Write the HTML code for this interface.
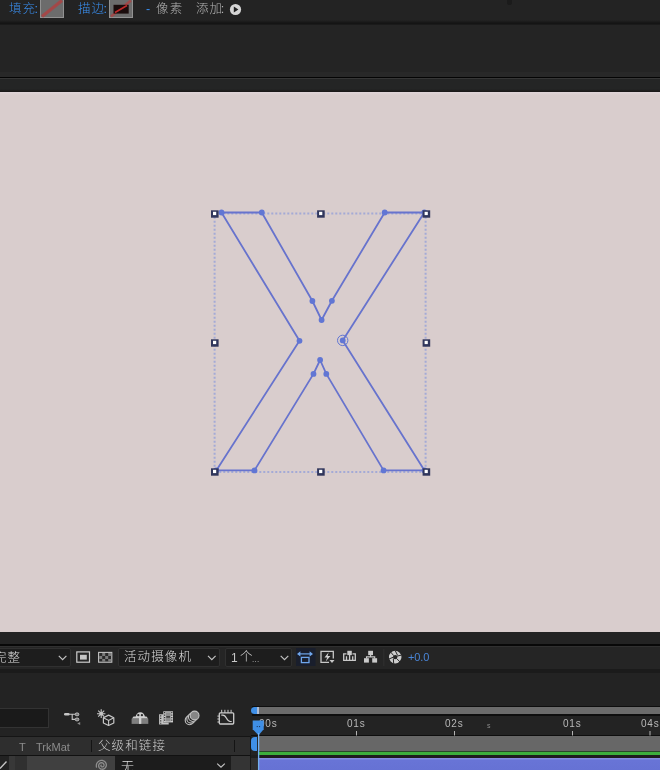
<!DOCTYPE html>
<html lang="zh-CN">
<head>
<meta charset="utf-8">
<title>AE</title>
<style>
*{margin:0;padding:0;box-sizing:border-box}
html,body{width:660px;height:770px;overflow:hidden;background:#232323}
.t{will-change:transform}
body{position:relative;font-family:"Liberation Sans","Noto Sans CJK SC",sans-serif;font-size:12px;color:#a8a8a8}
.abs{position:absolute}
.t{position:absolute;white-space:nowrap;line-height:1;font-weight:300}
</style>
</head>
<body>
<!-- top toolbar -->
<div class="abs" style="left:0;top:0;width:660px;height:20px;background:#232323"></div>
<div class="abs" style="left:0;top:19.500px;width:660px;height:6px;background:linear-gradient(#232323,#161616 45%,#141414 60%,#242424)"></div>
<div class="abs" style="left:0;top:25px;width:660px;height:47px;background:#242424"></div>
<div class="abs" style="left:0;top:72px;width:660px;height:4.600px;background:#282828"></div>
<div class="abs" style="left:0;top:76.600px;width:660px;height:1.700px;background:#040404"></div>
<div class="abs" style="left:0;top:78.300px;width:660px;height:1px;background:#363636"></div>
<div class="abs" style="left:0;top:79.300px;width:660px;height:9.300px;background:#242525"></div>
<div class="abs" style="left:0;top:88.600px;width:660px;height:3.400px;background:linear-gradient(#242525,#191717)"></div>
<div class="abs" style="left:506.500px;top:0;width:5px;height:4.500px;background:#1b1b1b;border-radius:0 0 2px 2px"></div>

<span class="t" style="left:9px;top:2.5px;color:#3a8ff0;font-size:12.5px;letter-spacing:.9px">填<span style="letter-spacing:-.3px">充</span>:</span>
<svg class="abs" style="left:40px;top:0" width="24" height="18" viewBox="0 0 24 18"><rect x="0.5" y="-1" width="23" height="18.5" fill="#6c6c6c" stroke="#929292"/><line x1="2" y1="16.500" x2="22" y2="0.500" stroke="#b04040" stroke-width="3.200" stroke-opacity=".8"/></svg>
<span class="t" style="left:78px;top:2.5px;color:#3a8ff0;font-size:12.5px;letter-spacing:.9px">描<span style="letter-spacing:-.3px">边</span>:</span>
<svg class="abs" style="left:109px;top:0" width="24" height="18" viewBox="0 0 24 18"><rect x="0.5" y="-1" width="23" height="18.5" fill="#6c6c6c" stroke="#929292"/><line x1="2" y1="16.500" x2="22" y2="0.500" stroke="#b04040" stroke-width="2.600" stroke-opacity=".75"/><rect x="4.500" y="4.800" width="15.200" height="8.800" fill="#1a0c0c"/><line x1="6" y1="12.5" x2="18" y2="5.5" stroke="#c02a2a" stroke-width="1.6"/></svg>
<span class="t" style="left:145.5px;top:2.5px;color:#3a8ff0;font-size:12.5px">-</span>
<span class="t" style="left:155.5px;top:2.5px;color:#b2b2b2;font-size:12.5px;letter-spacing:1.2px">像素</span>
<span class="t" style="left:195.8px;top:2.5px;color:#b2b2b2;font-size:12.5px;letter-spacing:.9px">添<span style="letter-spacing:-1.2px">加</span>:</span>
<svg class="abs" style="left:229px;top:3px" width="13" height="13" viewBox="0 0 13 13"><circle cx="6.500" cy="6.500" r="5.600" fill="#d6d6d6"/><path d="M4.800 3.600v5.800l4.600-2.900z" fill="#222"/></svg>

<!-- canvas -->
<div class="abs" style="left:0;top:91.800px;width:660px;height:540px;background:linear-gradient(#e0d5d8,#d9cdcd 3px)"></div>
<svg class="abs" style="left:0;top:92px" width="660" height="540" viewBox="0 92 660 540">
<g fill="none" stroke="#a4aad6" stroke-width="2" stroke-dasharray="2 2">
<path d="M215.300 213.600H425"/><path d="M215.300 472H425"/><path d="M214.600 216.800V470"/><path d="M425.600 216.800V470"/>
</g>
<path d="M221.5 212.5 L261.8 212.5 L312.4 301 L321.6 320 L331.9 300.8 L384.7 212.5 L424.3 212.5 L342.7 340.4 L424.5 470.4 L383.6 470.4 L326.3 373.9 L320.1 360 L313.5 373.9 L254.5 470.4 L216.3 470.4 L299.5 340.8Z" fill="none" stroke="#6773cd" stroke-width="1.800" stroke-linejoin="round"/>
<g fill="#6176d4"><circle cx="221.5" cy="212.5" r="2.900"/><circle cx="261.8" cy="212.5" r="2.900"/><circle cx="312.4" cy="301" r="2.900"/><circle cx="321.6" cy="320" r="2.900"/><circle cx="331.9" cy="300.8" r="2.900"/><circle cx="384.7" cy="212.5" r="2.900"/><circle cx="424.3" cy="212.5" r="2.900"/><circle cx="342.7" cy="340.4" r="2.900"/><circle cx="424.5" cy="470.4" r="2.900"/><circle cx="383.6" cy="470.4" r="2.900"/><circle cx="326.3" cy="373.9" r="2.900"/><circle cx="320.1" cy="360" r="2.900"/><circle cx="313.5" cy="373.9" r="2.900"/><circle cx="254.5" cy="470.4" r="2.900"/><circle cx="216.3" cy="470.4" r="2.900"/><circle cx="299.5" cy="340.8" r="2.900"/></g>
<circle cx="342.700" cy="340.400" r="5.200" fill="none" stroke="#6176d4" stroke-width="1"/>
<rect x="211.0" y="210.3" width="7.600" height="7.400" fill="#30365c"/><rect x="213.0" y="211.8" width="3.200" height="3.300" fill="#fff"/>
<rect x="211.0" y="339.3" width="7.600" height="7.400" fill="#30365c"/><rect x="213.0" y="340.8" width="3.200" height="3.300" fill="#fff"/>
<rect x="211.0" y="468.3" width="7.600" height="7.400" fill="#30365c"/><rect x="213.0" y="469.8" width="3.200" height="3.300" fill="#fff"/>
<rect x="317.1" y="210.3" width="7.600" height="7.400" fill="#30365c"/><rect x="319.1" y="211.8" width="3.200" height="3.300" fill="#fff"/>
<rect x="317.1" y="468.3" width="7.600" height="7.400" fill="#30365c"/><rect x="319.1" y="469.8" width="3.200" height="3.300" fill="#fff"/>
<rect x="422.6" y="210.3" width="7.600" height="7.400" fill="#30365c"/><rect x="424.6" y="211.8" width="3.200" height="3.300" fill="#fff"/>
<rect x="422.6" y="339.3" width="7.600" height="7.400" fill="#30365c"/><rect x="424.6" y="340.8" width="3.200" height="3.300" fill="#fff"/>
<rect x="422.6" y="468.3" width="7.600" height="7.400" fill="#30365c"/><rect x="424.6" y="469.8" width="3.200" height="3.300" fill="#fff"/>
</svg>

<!-- bottom -->
<div class="abs" style="left:0;top:631.500px;width:660px;height:13px;background:#232323"></div>
<div class="abs" style="left:0;top:644.400px;width:660px;height:1.400px;background:#080808"></div>
<div class="abs" style="left:0;top:645.800px;width:660px;height:1px;background:#303030"></div>
<div class="abs" style="left:0;top:646.800px;width:660px;height:22px;background:#252525"></div>
<div class="abs" style="left:0;top:668.800px;width:660px;height:3.800px;background:#1b1b1b"></div>
<div class="abs" style="left:0;top:673px;width:660px;height:97px;background:#232323"></div>

<!-- viewer toolbar -->
<div class="abs" style="left:-4px;top:648px;width:75px;height:19px;background:#1d1d1d;border:1px solid #303030;border-radius:2px"></div>
<span class="t" style="left:-6.500px;top:651.5px;color:#dcdcdc;font-size:12.5px;letter-spacing:1.1px">完整</span>
<div class="abs" style="left:118px;top:648px;width:102px;height:19px;background:#1d1d1d;border:1px solid #303030;border-radius:2px"></div>
<span class="t" style="left:124px;top:651px;color:#dcdcdc;font-size:12.5px;letter-spacing:1.1px">活动摄像机</span>
<div class="abs" style="left:225px;top:648px;width:67px;height:19px;background:#1d1d1d;border:1px solid #303030;border-radius:2px"></div>
<span class="t" style="left:231px;top:651.5px;color:#c8c8c8;font-size:12px">1</span><span class="t" style="left:239.5px;top:651px;color:#dcdcdc;font-size:12.5px">个</span><span class="t" style="left:251.5px;top:655.5px;color:#c8c8c8;font-size:8px;letter-spacing:.3px">...</span>
<span class="t" style="left:408px;top:652px;color:#4a86d8;font-size:11px;letter-spacing:-.1px">+0.0</span>
<svg class="abs" style="left:0;top:645px" width="660" height="30" viewBox="0 645 660 30" fill="none">
<g stroke="#c2c2c2" stroke-width="1.200"><path d="M58.800 655.900l3.800 3.700 3.800-3.700"/><path d="M208 655.900l3.800 3.700 3.800-3.700"/><path d="M280.700 655.900l3.800 3.700 3.800-3.700"/></g>
<!-- icon1 -->
<rect x="76.800" y="651.900" width="12.700" height="10.300" stroke="#cccccc" stroke-width="1.200"/><rect x="80" y="654.800" width="6.800" height="4.800" fill="#c4c4c4"/>
<!-- icon2 checker -->
<rect x="98.600" y="652.400" width="13.200" height="9.800" fill="#2a2a2a" stroke="#c4c4c4" stroke-width="1.100"/>
<g fill="#7c7c7c"><rect x="102.200" y="653" width="3" height="3"/><rect x="108.200" y="653" width="3" height="3"/><rect x="99.200" y="656" width="3" height="3"/><rect x="105.200" y="656" width="3" height="3"/><rect x="102.200" y="659" width="3" height="2.700"/><rect x="108.200" y="659" width="3" height="2.700"/></g>
<!-- iconA blue -->
<rect x="296" y="648" width="19.500" height="18" fill="#191e2c"/>
<path d="M299 653.900h12" stroke="#6fa6ec" stroke-width="1.200"/><path d="M300.400 651.300v5.200l-3.400-2.600zM309.600 651.300v5.200l3.400-2.600z" fill="#6fa6ec"/><rect x="301.400" y="657.400" width="7.600" height="5.200" stroke="#6fa6ec" stroke-width="1.300"/>
<!-- iconB monitor -->
<g stroke="#c8c8c8" stroke-width="1.300"><path d="M329 662.400H321V651.300H333.300V658.500"/></g>
<path d="M328.700 652.300l-4.200 5.300h2.700l-1.500 4 4.700-5.700h-2.800z" fill="#d0d0d0"/>
<path d="M329.500 660h5l-2.500 3z" fill="#c8c8c8"/>
<!-- iconC -->
<g stroke="#cacaca" stroke-width="1.300"><path d="M346.500 653.800H343.700V660.300H355.300V653.800H352.500"/><path d="M346.500 656.300v4M349.600 655v5.300M352.700 656.300v4"/></g><rect x="347.300" y="650.800" width="4.500" height="4.300" fill="#cacaca"/>
<!-- iconD -->
<g fill="#cacaca"><rect x="368.200" y="650.800" width="4.800" height="4.300"/><rect x="364" y="658.200" width="4.900" height="4.400"/><rect x="372.200" y="658.200" width="4.900" height="4.400"/></g>
<path d="M370.600 655v2M366.500 658.500v-1.600h8.200v1.600" stroke="#cacaca" stroke-width="1.100"/>
<path d="M383.800 649v17" stroke="#2f2f2f" stroke-width="1"/>
<!-- aperture -->
<circle cx="395.200" cy="657.100" r="4.250" stroke="#cccccc" stroke-width="4.100"/>
<g stroke="#262626" stroke-width="1"><path d="M395.200 650.600l2.300 4.600M401.500 655.100l-4.800 1.100M400.200 662.100l-3.500-3.500M393.700 663.600l-.4-5M388.900 659.100l4.500-2M390.700 652.100l3 3.500"/></g>
</svg>

<!-- timeline left -->
<div class="abs" style="left:-2px;top:708px;width:51px;height:20px;background:#1a1a1a;border:1px solid #333"></div>
<div class="abs" style="left:0;top:736px;width:250px;height:1px;background:#151515"></div>
<div class="abs" style="left:0;top:737px;width:250px;height:17.600px;background:#2e2e2e"></div>
<div class="abs" style="left:0;top:754.600px;width:250px;height:1.600px;background:#111"></div>
<div class="abs" style="left:0;top:756.200px;width:9px;height:14px;background:#222"></div>
<div class="abs" style="left:9px;top:756.200px;width:6px;height:14px;background:#383838"></div>
<div class="abs" style="left:15px;top:756.200px;width:12px;height:14px;background:#303030"></div>
<div class="abs" style="left:27px;top:756.200px;width:88px;height:14px;background:#404040"></div>
<div class="abs" style="left:115px;top:756.200px;width:116px;height:14px;background:#1c1c1c"></div>
<div class="abs" style="left:231px;top:756.200px;width:19px;height:14px;background:#343434"></div>
<div class="abs" style="left:91px;top:740px;width:1px;height:12px;background:#141414"></div>
<div class="abs" style="left:234px;top:740px;width:1px;height:12px;background:#141414"></div>
<div class="abs" style="left:250px;top:736px;width:1px;height:34px;background:#181818"></div>
<div class="abs" style="left:251px;top:758px;width:8px;height:12px;background:#303030"></div>
<span class="t" style="left:19.2px;top:741.6px;color:#8c8c8c;font-size:11px">T</span>
<span class="t" style="left:35.7px;top:741.6px;color:#8c8c8c;font-size:11px">TrkMat</span>
<span class="t" style="left:98px;top:740px;color:#cacaca;font-size:12.5px;letter-spacing:1.1px">父级和链接</span>
<span class="t" style="left:121px;top:760px;color:#e0e0e0;font-size:13px">无</span>

<!-- timeline icons -->
<svg class="abs" style="left:55px;top:704px" width="190" height="28" viewBox="55 704 190 28" fill="none">
<!-- hierarchy -->
<rect x="64" y="713" width="5.700" height="2.600" rx="1.300" fill="#c6c6c6"/>
<path d="M69.500 714.300H75.200M72.200 714.300V719.400H75.200" stroke="#c6c6c6" stroke-width="1.100"/>
<rect x="75.300" y="713" width="3.500" height="2.700" rx="1.200" fill="#777" stroke="#c6c6c6" stroke-width="1"/>
<rect x="75.300" y="718.100" width="3.500" height="2.700" rx="1.200" fill="#777" stroke="#c6c6c6" stroke-width="1"/>
<path d="M80.200 722v3l-3-1.500z" fill="#8a8a8a"/>
<!-- star + cube -->
<g stroke="#c6c6c6" stroke-width="1.100"><path d="M101.200 709.300v8.800M97 713.700h8.400M98.200 710.700l6 6M104.200 710.700l-6 6"/></g>
<circle cx="101.200" cy="713.700" r="1.700" fill="#c6c6c6"/>
<path d="M108.600 715.100l5.200 2.700v5.200l-5.200 2.500-5.200-2.500v-5.200z" fill="#232323" stroke="#c6c6c6" stroke-width="1.200" stroke-linejoin="round"/>
<path d="M103.400 717.800l5.200 2.700 5.200-2.700M108.600 720.500v5" stroke="#c6c6c6" stroke-width="1.100"/>
<!-- shy guy -->
<rect x="131.600" y="718.600" width="16.700" height="5.300" fill="#7e7e7e"/>
<path d="M135.700 716.900a4.600 4.600 0 0 1 9.200 0z" fill="#cfcfcf"/>
<path d="M133.500 716.600h13l1.500 2h-16z" fill="#cfcfcf"/>
<rect x="139" y="716.600" width="2.300" height="7.300" fill="#cfcfcf"/>
<circle cx="138.300" cy="715.200" r="1.150" fill="#2a2a2a"/><circle cx="141.900" cy="715.200" r="1.150" fill="#2a2a2a"/>
<!-- film stack -->
<path d="M159.100 714.200h4.200v8.200h5.400v2h-9.600z" fill="#c4c4c4"/>
<path d="M160.700 715.200v8.500" stroke="#333" stroke-width="1.200" stroke-dasharray="1.200 1.300"/>
<rect x="163.300" y="711.300" width="9.700" height="11.100" fill="#cdcdcd"/>
<rect x="165.600" y="712.300" width="5.100" height="9.100" fill="#8e8e8e"/>
<rect x="166.300" y="716.200" width="3.700" height="1.400" fill="#333"/>
<g stroke="#333" stroke-width="1.200" stroke-dasharray="1.200 1.300"><path d="M164.600 712.100v9.800M171.800 712.100v9.800"/></g>
<!-- motion blur -->
<g stroke="#c2c2c2" stroke-width="1.100"><circle cx="189.600" cy="720.300" r="4.400"/><circle cx="191.200" cy="718.700" r="4.400" fill="#232323"/><circle cx="192.900" cy="717.100" r="4.400" fill="#232323"/><circle cx="194.600" cy="715.500" r="4.400" fill="#868686"/></g>
<!-- graph editor -->
<rect x="219.300" y="712.800" width="14.400" height="11.200" rx="1" stroke="#cdcdcd" stroke-width="1.300"/>
<g stroke="#cdcdcd" stroke-width="1"><path d="M221.700 709.800v3M224.900 709.800v3M228 709.800v3M231.100 709.800v3M217.400 716.100h2M217.400 719h2M217.400 722h2"/></g>
<path d="M221.300 715.200h1.500c4.200 0 3.200 6.300 7.400 6.300h1.500" stroke="#cdcdcd" stroke-width="1.200"/>
</svg>

<!-- timeline right -->
<div class="abs" style="left:251.500px;top:705.900px;width:409px;height:10.100px;background:#0e0e0e"></div>
<div class="abs" style="left:257.300px;top:707.300px;width:403px;height:7.200px;background:#6b6b6b"></div>
<div class="abs" style="left:257.300px;top:707.300px;width:2.200px;height:7.200px;background:#aebcd4"></div>
<div class="abs" style="left:251px;top:707.300px;width:6.300px;height:7.200px;background:#3f8fe6;border-radius:5px 0 0 5px"></div>
<div class="abs" style="left:251px;top:716px;width:409px;height:18.600px;background:#232323"></div>
<div class="abs" style="left:251px;top:734.600px;width:409px;height:1.600px;background:#0e0e0e"></div>
<div class="abs" style="left:259px;top:736px;width:401px;height:15px;background:#676767"></div>
<div class="abs" style="left:251px;top:737px;width:6px;height:14px;background:#3f8fe6;border-radius:4px 0 0 4px"></div>
<div class="abs" style="left:259px;top:751px;width:401px;height:1px;background:#2a4a2a"></div>
<div class="abs" style="left:259px;top:752px;width:401px;height:3px;background:#3db03d"></div>
<div class="abs" style="left:251px;top:755px;width:409px;height:3px;background:#1e1e1e"></div>
<div class="abs" style="left:259px;top:757.800px;width:401px;height:12.200px;background:linear-gradient(#8a94e4,#6874d6 2.500px,#6672d4)"></div>
<span class="t" style="left:259.200px;top:718.900px;color:#b8b8b8;font-size:10px;letter-spacing:.8px">00s</span>
<span class="t" style="left:347px;top:718.900px;color:#b8b8b8;font-size:10px;letter-spacing:.8px">01s</span>
<span class="t" style="left:445px;top:718.900px;color:#b8b8b8;font-size:10px;letter-spacing:.8px">02s</span>
<span class="t" style="left:487px;top:722px;color:#8a8a8a;font-size:7px">s</span>
<span class="t" style="left:563px;top:718.900px;color:#b8b8b8;font-size:10px;letter-spacing:.8px">01s</span>
<span class="t" style="left:641px;top:718.900px;color:#b8b8b8;font-size:10px;letter-spacing:.8px">04s</span>
<svg class="abs" style="left:0;top:700px" width="660" height="70" viewBox="0 700 660 70" fill="none">
<g stroke="#b4b4b4" stroke-width="1"><path d="M356.500 731v4.500M454.500 731v4.500M572.500 731v4.500M650 731v4.500"/></g>
<path d="M252.700 720.600h11v8.600l-5.100 6-5.900-6z" fill="#3f8fe6"/><rect x="256.700" y="726" width="1.100" height="1.100" fill="#1c3a66"/><rect x="259" y="726" width="1.100" height="1.100" fill="#1c3a66"/>
<path d="M258.600 733V770" stroke="#74b0f0" stroke-width="1.300"/>
<!-- spiral -->
<path d="M101.14 765.15 L101.02 765.32 L100.94 765.52 L100.92 765.75 L100.95 766.00 L101.05 766.25 L101.21 766.49 L101.44 766.69 L101.72 766.84 L102.04 766.93 L102.40 766.94 L102.76 766.86 L103.12 766.70 L103.44 766.45 L103.71 766.12 L103.90 765.72 L104.00 765.27 L104.00 764.79 L103.89 764.31 L103.66 763.84 L103.33 763.43 L102.90 763.09 L102.39 762.85 L101.82 762.72 L101.21 762.73 L100.61 762.87 L100.04 763.15 L99.53 763.56 L99.11 764.09 L98.81 764.71 L98.65 765.40 L98.65 766.13 L98.81 766.85 L99.14 767.54 L99.62 768.16 L100.24 768.66 L100.97 769.02 L101.78 769.22 L102.63 769.23 L103.48 769.06 L104.29 768.69 L105.01 768.14 L105.61 767.44 L106.04 766.60 L106.28 765.68 L106.32 764.70 L106.14 763.72 L105.74 762.79 L105.13 761.96 L104.34 761.27 L103.41 760.76 L102.37 760.46 L101.27 760.39 L100.16 760.57 L99.11 761.00 L98.16 761.66 L97.36 762.52 L96.77 763.55 L96.41 764.71 L96.31 765.93 L96.48 767.16" stroke="#8e8e8e" stroke-width="1.300" stroke-linecap="round"/>
<path d="M0 768.500l6.500-7" stroke="#c8c8c8" stroke-width="1.300"/>
<path d="M217.200 763.600l3.800 3.600 3.800-3.600" stroke="#c2c2c2" stroke-width="1.200"/>
</svg>
</body>
</html>
